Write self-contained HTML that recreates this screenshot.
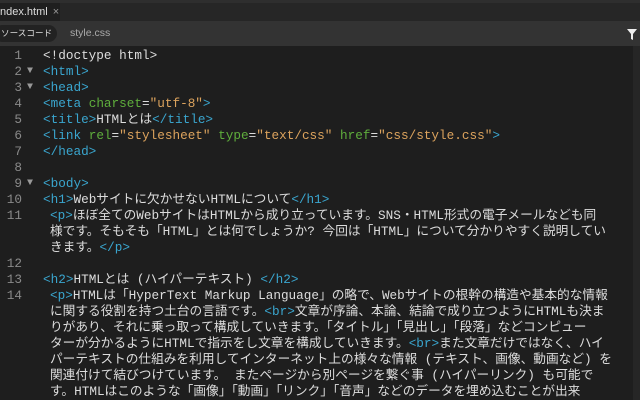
<!DOCTYPE html>
<html><head><meta charset="utf-8"><style>
html,body{margin:0;width:640px;height:400px;overflow:hidden}
body{background:#1e1e1e;font-family:"Liberation Sans","Noto Sans CJK JP",sans-serif;position:relative}
.top{position:absolute;left:0;top:0;width:640px;height:3px;background:#2e2e2e}
.tabs{position:absolute;left:0;top:3px;width:640px;height:18px;background:#262626}
.tab{position:absolute;left:0;top:0;width:60px;height:18px;background:#1f1f1f;color:#ddd;font-size:11px;line-height:18px;white-space:nowrap;overflow:hidden}
.sub{position:absolute;left:0;top:21px;width:640px;height:25px;background:#333}
.pill{position:absolute;left:-6px;top:4px;height:17px;width:63px;border-radius:9px;background:#222;color:#ddd;font-size:8.6px;line-height:17px;padding-left:7px;box-sizing:border-box;white-space:nowrap;overflow:hidden}
.css{position:absolute;left:70px;top:4px;color:#aaa;font-size:10.5px;line-height:17px}
.code{position:absolute;left:0;top:46px;width:640px;height:354px;overflow:hidden;font-family:"Liberation Mono","Noto Sans CJK JP",monospace;font-size:12.7px;color:#ddd}
.l{position:absolute;height:16px;line-height:16px;white-space:pre}
.n{position:absolute;width:22px;text-align:right;color:#8a8a8a;height:16px;line-height:16px}
.f{position:absolute;left:27px;color:#999;font-size:10px;line-height:16px}
.t{color:#3aa6cf}.a{color:#5fae3c}.s{color:#dca35d}
.sb{position:absolute;left:633px;top:46px;width:7px;height:354px;background:#262626}
</style></head><body>
<div class="top"></div>
<div class="tabs"><div class="tab">ndex.html<span style="color:#999;margin-left:5px">×</span></div></div>
<div class="sub"><div class="pill">ソースコード</div><div class="css">style.css</div>
<svg style="position:absolute;left:627px;top:8px" width="10" height="11" viewBox="0 0 10 11"><path d="M0 0H10L6 5V11L4 10V5Z" fill="#eee"/></svg></div>
<div class="code">
<div class="sb" style="top:0"></div>
<div class="n" style="top:2px">1</div><div class="n" style="top:18px">2</div><div class="n" style="top:34px">3</div><div class="n" style="top:50px">4</div><div class="n" style="top:66px">5</div><div class="n" style="top:82px">6</div><div class="n" style="top:98px">7</div><div class="n" style="top:114px">8</div><div class="n" style="top:130px">9</div><div class="n" style="top:146px">10</div><div class="n" style="top:162px">11</div><div class="n" style="top:210px">12</div><div class="n" style="top:226px">13</div><div class="n" style="top:242px">14</div>
<div class="f" style="top:18px">▼</div><div class="f" style="top:34px">▼</div><div class="f" style="top:130px">▼</div>
<div class="l" style="left:43px;top:2px">&lt;!doctype html&gt;</div>
<div class="l t" style="left:43px;top:18px">&lt;html&gt;</div>
<div class="l t" style="left:43px;top:34px">&lt;head&gt;</div>
<div class="l" style="left:43px;top:50px"><span class="t">&lt;meta</span> <span class="a">charset</span>=<span class="s">"utf-8"</span><span class="t">&gt;</span></div>
<div class="l" style="left:43px;top:66px"><span class="t">&lt;title&gt;</span>HTMLとは<span class="t">&lt;/title&gt;</span></div>
<div class="l" style="left:43px;top:82px"><span class="t">&lt;link</span> <span class="a">rel</span>=<span class="s">"stylesheet"</span> <span class="a">type</span>=<span class="s">"text/css"</span> <span class="a">href</span>=<span class="s">"css/style.css"</span><span class="t">&gt;</span></div>
<div class="l t" style="left:43px;top:98px">&lt;/head&gt;</div>
<div class="l t" style="left:43px;top:130px">&lt;body&gt;</div>
<div class="l" style="left:43px;top:146px"><span class="t">&lt;h1&gt;</span>Webサイトに欠かせないHTMLについて<span class="t">&lt;/h1&gt;</span></div>
<div class="l" style="left:50px;top:162px"><span class="t">&lt;p&gt;</span>ほぼ全てのWebサイトはHTMLから成り立っています。SNS・HTML形式の電子メールなども同</div>
<div class="l" style="left:50px;top:178px">様です。そもそも「HTML」とは何でしょうか? 今回は「HTML」について分かりやすく説明してい</div>
<div class="l" style="left:50px;top:194px">きます。<span class="t">&lt;/p&gt;</span></div>
<div class="l" style="left:43px;top:226px"><span class="t">&lt;h2&gt;</span>HTMLとは (ハイパーテキスト) <span class="t">&lt;/h2&gt;</span></div>
<div class="l" style="left:50px;top:242px"><span class="t">&lt;p&gt;</span>HTMLは「HyperText Markup Language」の略で、Webサイトの根幹の構造や基本的な情報</div>
<div class="l" style="left:50px;top:258px">に関する役割を持つ土台の言語です。<span class="t">&lt;br&gt;</span>文章が序論、本論、結論で成り立つようにHTMLも決ま</div>
<div class="l" style="left:50px;top:274px">りがあり、それに乗っ取って構成していきます。「タイトル」「見出し」「段落」などコンピュー</div>
<div class="l" style="left:50px;top:290px">ターが分かるようにHTMLで指示をし文章を構成していきます。<span class="t">&lt;br&gt;</span>また文章だけではなく、ハイ</div>
<div class="l" style="left:50px;top:306px">パーテキストの仕組みを利用してインターネット上の様々な情報 (テキスト、画像、動画など) を</div>
<div class="l" style="left:50px;top:322px">関連付けて結びつけています。 またページから別ページを繋ぐ事 (ハイパーリンク) も可能で</div>
<div class="l" style="left:50px;top:338px">す。HTMLはこのような「画像」「動画」「リンク」「音声」などのデータを埋め込むことが出来</div>
<div class="l" style="left:50px;top:354px">ます。<span class="t">&lt;/p&gt;</span></div>
</div>
</body></html>
